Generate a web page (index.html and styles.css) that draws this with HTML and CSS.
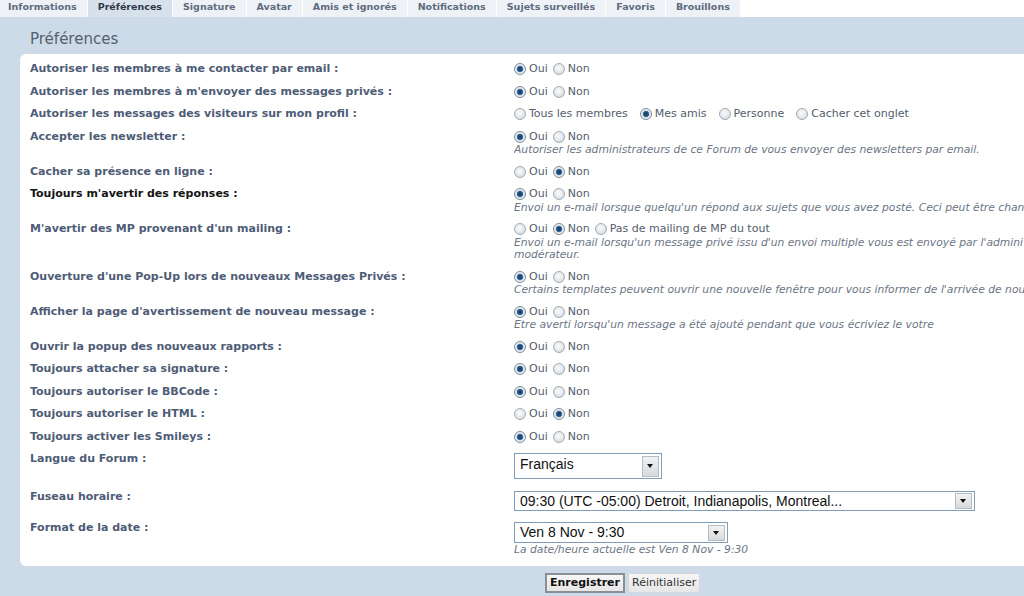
FILE: index.html
```html
<!DOCTYPE html>
<html lang="fr">
<head>
<meta charset="utf-8">
<title>Préférences</title>
<link rel="stylesheet" href="styles.css">
</head>
<body>
<div class="tabs">
  <span class="tab">Informations</span>
  <span class="tab active">Préférences</span>
  <span class="tab">Signature</span>
  <span class="tab">Avatar</span>
  <span class="tab">Amis et ignorés</span>
  <span class="tab">Notifications</span>
  <span class="tab">Sujets surveillés</span>
  <span class="tab">Favoris</span>
  <span class="tab">Brouillons</span>
</div>
<h1 class="title">Préférences</h1>
<div class="panel">
  <div class="row">
    <div class="label">Autoriser les membres à me contacter par email :</div>
    <div class="value"><div class="opts"><span class="opt"><i class="r on"></i>Oui</span><span class="opt"><i class="r"></i>Non</span></div></div>
  </div>
  <div class="row">
    <div class="label">Autoriser les membres à m'envoyer des messages privés :</div>
    <div class="value"><div class="opts"><span class="opt"><i class="r on"></i>Oui</span><span class="opt"><i class="r"></i>Non</span></div></div>
  </div>
  <div class="row">
    <div class="label">Autoriser les messages des visiteurs sur mon profil :</div>
    <div class="value"><div class="opts wide"><span class="opt"><i class="r"></i>Tous les membres</span><span class="opt"><i class="r on"></i>Mes amis</span><span class="opt"><i class="r"></i>Personne</span><span class="opt"><i class="r"></i>Cacher cet onglet</span></div></div>
  </div>
  <div class="row">
    <div class="label">Accepter les newsletter :</div>
    <div class="value"><div class="opts"><span class="opt"><i class="r on"></i>Oui</span><span class="opt"><i class="r"></i>Non</span></div>
      <div class="desc">Autoriser les administrateurs de ce Forum de vous envoyer des newsletters par email.</div></div>
  </div>
  <div class="row">
    <div class="label">Cacher sa présence en ligne :</div>
    <div class="value"><div class="opts"><span class="opt"><i class="r"></i>Oui</span><span class="opt"><i class="r on"></i>Non</span></div></div>
  </div>
  <div class="row">
    <div class="label hover">Toujours m'avertir des réponses :</div>
    <div class="value"><div class="opts"><span class="opt"><i class="r on"></i>Oui</span><span class="opt"><i class="r"></i>Non</span></div>
      <div class="desc">Envoi un e-mail lorsque quelqu'un répond aux sujets que vous avez posté. Ceci peut être chan</div></div>
  </div>
  <div class="row">
    <div class="label">M'avertir des MP provenant d'un mailing :</div>
    <div class="value"><div class="opts"><span class="opt"><i class="r"></i>Oui</span><span class="opt"><i class="r on"></i>Non</span><span class="opt"><i class="r"></i>Pas de mailing de MP du tout</span></div>
      <div class="desc">Envoi un e-mail lorsqu'un message privé issu d'un envoi multiple vous est envoyé par l'admini</div>
      <div class="desc">modérateur.</div></div>
  </div>
  <div class="row">
    <div class="label">Ouverture d'une Pop-Up lors de nouveaux Messages Privés :</div>
    <div class="value"><div class="opts"><span class="opt"><i class="r on"></i>Oui</span><span class="opt"><i class="r"></i>Non</span></div>
      <div class="desc">Certains templates peuvent ouvrir une nouvelle fenêtre pour vous informer de l'arrivée de nou</div></div>
  </div>
  <div class="row">
    <div class="label">Afficher la page d'avertissement de nouveau message :</div>
    <div class="value"><div class="opts"><span class="opt"><i class="r on"></i>Oui</span><span class="opt"><i class="r"></i>Non</span></div>
      <div class="desc">Etre averti lorsqu'un message a été ajouté pendant que vous écriviez le votre</div></div>
  </div>
  <div class="row">
    <div class="label">Ouvrir la popup des nouveaux rapports :</div>
    <div class="value"><div class="opts"><span class="opt"><i class="r on"></i>Oui</span><span class="opt"><i class="r"></i>Non</span></div></div>
  </div>
  <div class="row">
    <div class="label">Toujours attacher sa signature :</div>
    <div class="value"><div class="opts"><span class="opt"><i class="r on"></i>Oui</span><span class="opt"><i class="r"></i>Non</span></div></div>
  </div>
  <div class="row">
    <div class="label">Toujours autoriser le BBCode :</div>
    <div class="value"><div class="opts"><span class="opt"><i class="r on"></i>Oui</span><span class="opt"><i class="r"></i>Non</span></div></div>
  </div>
  <div class="row">
    <div class="label">Toujours autoriser le HTML :</div>
    <div class="value"><div class="opts"><span class="opt"><i class="r"></i>Oui</span><span class="opt"><i class="r on"></i>Non</span></div></div>
  </div>
  <div class="row">
    <div class="label">Toujours activer les Smileys :</div>
    <div class="value"><div class="opts"><span class="opt"><i class="r on"></i>Oui</span><span class="opt"><i class="r"></i>Non</span></div></div>
  </div>
  <div class="row sel-row first">
    <div class="label">Langue du Forum :</div>
    <div class="value"><div class="select lang"><span class="stext">Français</span><span class="arrow"></span></div></div>
  </div>
  <div class="row sel-row">
    <div class="label">Fuseau horaire :</div>
    <div class="value"><div class="select tz"><span class="stext">09:30 (UTC -05:00) Detroit, Indianapolis, Montreal...</span><span class="arrow"></span></div></div>
  </div>
  <div class="row sel-row last">
    <div class="label">Format de la date :</div>
    <div class="value"><div class="select fmt"><span class="stext">Ven 8 Nov - 9:30</span><span class="arrow"></span></div>
      <div class="desc">La date/heure actuelle est Ven 8 Nov - 9:30</div></div>
  </div>
</div>
<div class="actions">
  <span class="btn primary">Enregistrer</span>
  <span class="btn">Réinitialiser</span>
</div>
</body>
</html>
```
FILE: styles.css
```css
html, body {
  margin: 0;
  padding: 0;
  overflow: hidden;
}
body {
  background: #cddbe9;
  font-family: "DejaVu Sans", Verdana, sans-serif;
  width: 1024px;
  height: 596px;
}
.tabs {
  display: flex;
  background: #ffffff;
  height: 17px;
}
.tab {
  display: block;
  padding: 0 10px;
  margin-right: 1px;
  background: #eef2f6;
  color: #5e6b7e;
  font-weight: bold;
  font-size: 9.5px;
  line-height: 14px;
  height: 17px;
  white-space: nowrap;
}
.tab:first-child {
  padding-left: 8px;
}
.tab.active {
  background: #d6e1ec;
  color: #2f3846;
}
.title {
  margin: 0;
  height: 37px;
  box-sizing: border-box;
  padding: 13px 0 0 30px;
  font-size: 15px;
  line-height: 18px;
  font-weight: normal;
  color: #565f6d;
}
.panel {
  margin-left: 20px;
  margin-right: -40px;
  background: #ffffff;
  border-radius: 6px 0 0 6px;
  padding: 4px 0 5px 0;
}
.row {
  display: grid;
  grid-template-columns: 494px 1fr;
}
.label {
  padding: 4px 0 4px 10px;
  font-size: 11px;
  font-weight: bold;
  line-height: 14.5px;
  color: #4e5c76;
  white-space: nowrap;
}
.label.hover {
  color: #141414;
}
.value {
  padding: 4px 0;
  font-size: 11px;
  line-height: 14.5px;
  color: #545d6b;
  white-space: nowrap;
  overflow: hidden;
}
.opts {
  display: flex;
  align-items: center;
  height: 14.5px;
}
.opt {
  display: flex;
  align-items: center;
  margin-right: 5px;
}
.opts.wide .opt {
  margin-right: 12px;
}
.r {
  display: block;
  flex: none;
  width: 12px;
  height: 12px;
  box-sizing: border-box;
  border-radius: 50%;
  border: 1px solid #a3abb4;
  background: radial-gradient(circle at 45% 40%, #fbfbfb 0, #e4e7ea 55%, #c9ced4 100%);
  margin-right: 3px;
}
.r.on {
  border-color: #7d8c9c;
  background: radial-gradient(circle, #163f66 0, #1f4e7a 2px, #4f7fa8 3px, #dde3e9 3.6px, #eef1f4 4.5px, #c6ccd3 100%);
}
.desc {
  font-style: italic;
  font-size: 10.75px;
  line-height: 12.5px;
  color: #6b7585;
  white-space: nowrap;
}
.sel-row .value {
  padding-bottom: 6px;
}
.sel-row.first .value {
  padding-bottom: 7px;
}
.select {
  display: flex;
  align-items: center;
  justify-content: space-between;
  box-sizing: border-box;
  border: 1px solid #7f9db9;
  background: #ffffff;
  margin-top: 1px;
  font-family: "Liberation Sans", Arial, sans-serif;
  font-size: 14px;
  color: #111111;
  padding: 0 2px 0 5px;
}
.select.lang {
  width: 148px;
  height: 26px;
  align-items: flex-start;
}
.select.lang .stext {
  padding-top: 3px;
}
.select.lang .arrow {
  align-self: center;
}
.select.tz {
  width: 461px;
  height: 20px;
}
.select.fmt {
  width: 214px;
  height: 21px;
}
.arrow {
  position: relative;
  width: 17px;
  height: 16px;
  box-sizing: border-box;
  border: 1px solid #b5bcc4;
  background: linear-gradient(#f2f2f2, #d7d9dc);
}
.select.lang .arrow {
  height: 21px;
}
.arrow::after {
  content: "";
  position: absolute;
  left: 50%;
  top: 50%;
  margin: -2px 0 0 -3.5px;
  border-left: 3.5px solid transparent;
  border-right: 3.5px solid transparent;
  border-top: 4px solid #111111;
}
.sel-row.last .value {
  padding-bottom: 4px;
}
.sel-row.last .desc {
  margin-top: 1px;
}
.actions {
  display: flex;
  gap: 3px;
  padding: 7px 0 0 545px;
}
.btn {
  display: inline-block;
  box-sizing: border-box;
  height: 20px;
  padding: 0 3px;
  font-size: 11px;
  line-height: 18px;
  color: #333333;
  background: linear-gradient(#f6f6f6, #e6e6e6);
  border: 1px solid #d2d6da;
}
.btn.primary {
  font-weight: bold;
  color: #111111;
  border: 2px solid #8a8f95;
  line-height: 16px;
}
```
